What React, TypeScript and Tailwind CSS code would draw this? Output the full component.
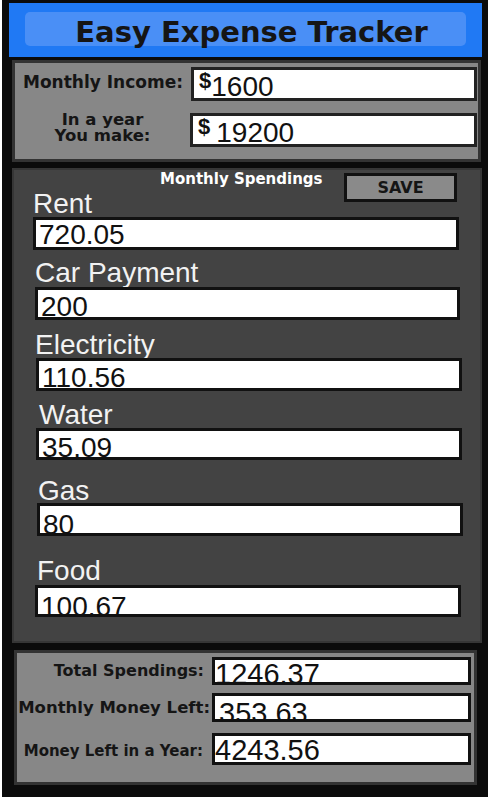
import React from 'react'

const label = "font-['DejaVu_Sans',sans-serif] font-bold text-[#151515]"
const value = "font-['Liberation_Sans',Arial,sans-serif] text-[#111]"

const spendings = [
    { name: 'Rent', amount: '720.05', labelCls: '-mt-[12px] ml-[19px]', boxCls: 'mt-0 ml-[19px] w-[426px] h-[33px]', textCls: 'pt-[1px]' },
    { name: 'Car Payment', amount: '200', labelCls: 'mt-[9px] ml-[21px]', boxCls: 'mt-[1px] ml-[21px] w-[425px] h-[33px]', textCls: 'pt-[3px]' },
    { name: 'Electricity', amount: '110.56', labelCls: 'mt-[11px] ml-[21px]', boxCls: 'mt-0 ml-[22px] w-[426px] h-[33px]', textCls: 'pt-[3px]' },
    { name: 'Water', amount: '35.09', labelCls: 'mt-[10px] ml-[25px]', boxCls: 'mt-0 ml-[22px] w-[426px] h-[32px]', textCls: 'pt-[3px]' },
    { name: 'Gas', amount: '80', labelCls: 'mt-[17px] ml-[24px]', boxCls: '-mt-[1px] ml-[23px] w-[426px] h-[33px]', textCls: 'pt-[5px]' },
    { name: 'Food', amount: '100.67', labelCls: 'mt-[21px] ml-[23px]', boxCls: 'mt-[1px] ml-[21px] w-[426px] h-[32px]', textCls: 'pt-[5px]' },
]

const totals = [
    { name: 'Total Spendings:', amount: '1246.37', rowCls: 'mt-[4px]', labelCls: 'text-[16px] mt-[6px] pr-[6px]', boxCls: 'h-[28px]', textCls: 'pt-0 pl-0' },
    { name: 'Monthly Money Left:', amount: '353.63', rowCls: 'mt-[8px]', labelCls: 'text-[16.5px] mt-[7px] pr-0', boxCls: 'h-[29px]', textCls: 'pt-[3px] pl-[4px]' },
    { name: 'Money Left in a Year:', amount: '4243.56', rowCls: 'mt-[11px]', labelCls: 'text-[15px] mt-[11px] pr-[7px]', boxCls: 'h-[32px]', textCls: 'pt-0 pl-0' },
]

function IncomePanel() {
    return (
        <div className="mt-[3px] ml-[10px] w-[469px] h-[102px] bg-[#878787] border-[3px] border-[#333] flex flex-col">
            <div className="flex mt-[4px]">
                <div className={`${label} w-[168px] mt-[7px] text-right text-[17px] leading-none whitespace-nowrap`}>Monthly Income:</div>
                <div className="ml-[8px] w-[286px] h-[34px] bg-white border-[3px] border-[#222] flex items-start pl-[5px] overflow-hidden">
                    <span className={`${value} font-bold text-[22px] leading-none`}>$</span>
                    <span className={`${value} text-[28px] leading-none mt-[3px]`}>1600</span>
                </div>
            </div>
            <div className="flex mt-[12px]">
                <div className={`${label} w-[175px] -mt-[1px] text-center text-[16.5px] leading-[16px]`}>
                    In a year
                    <br />
                    You make:
                </div>
                <div className="w-[287px] h-[34px] bg-white border-[3px] border-[#222] flex items-start pl-[5px] overflow-hidden">
                    <span className={`${value} font-bold text-[22px] leading-none`}>$</span>
                    <span className={`${value} text-[28px] leading-none mt-[3px] ml-[6px]`}>19200</span>
                </div>
            </div>
        </div>
    )
}

function SpendingsPanel() {
    return (
        <div className="mt-[6px] ml-[10px] w-[470px] bg-[#434343] border-2 border-[#363636] flex flex-col pb-[24px]">
            <div className="flex h-[32px] items-start">
                <div className={`${label} ml-[146px] mt-[2px] text-[15px] leading-none text-white whitespace-nowrap`}>Monthly Spendings</div>
                <button className={`${label} ml-auto mr-[23px] mt-[3px] w-[113px] h-[29px] bg-[#8a8a8a] border-[3px] border-[#111] text-[16px] leading-none text-[#151515]`}>
                    SAVE
                </button>
            </div>
            {spendings.map(item => (
                <React.Fragment key={item.name}>
                    <div className={`${item.labelCls} font-['Liberation_Sans',Arial,sans-serif] text-[28px] leading-[27px] h-[27px] text-[#f2f2f2]`}>
                        {item.name}
                    </div>
                    <div className={`${item.boxCls} bg-white border-[3px] border-[#111] overflow-hidden pl-[3px]`}>
                        <div className={`${item.textCls} ${value} text-[28px] leading-none`}>{item.amount}</div>
                    </div>
                </React.Fragment>
            ))}
        </div>
    )
}

function TotalsPanel() {
    return (
        <div className="mt-[7px] ml-[12px] w-[463px] h-[135px] bg-[#878787] border-[3px] border-[#333] flex flex-col">
            {totals.map(row => (
                <div key={row.name} className={`${row.rowCls} flex items-start`}>
                    <div className={`${label} ${row.labelCls} w-[193px] text-right leading-none whitespace-nowrap`}>{row.name}</div>
                    <div className={`${row.boxCls} ml-[2px] w-[259px] bg-white border-[3px] border-[#111] overflow-hidden`}>
                        <div className={`${row.textCls} ${value} text-[29px] leading-none`}>{row.amount}</div>
                    </div>
                </div>
            ))}
        </div>
    )
}

export default function App() {
    return (
        <div className="w-[490px] h-[800px] bg-white">
            <div className="ml-[2px] w-[486px] h-[797px] bg-[#0b0b0b] flex flex-col">
                <div className="mt-[3px] ml-[7px] w-[473px] h-[54px] bg-[#2079f4] pt-[9px] px-[16px]">
                    <div className="h-[34px] rounded-[5px] bg-[#4a8ff6] pt-[6px] pl-[12px] text-center">
                        <h1 className={`${label} text-[29px] leading-none text-[#222] whitespace-nowrap`}>Easy Expense Tracker</h1>
                    </div>
                </div>
                <IncomePanel />
                <SpendingsPanel />
                <TotalsPanel />
            </div>
        </div>
    )
}
